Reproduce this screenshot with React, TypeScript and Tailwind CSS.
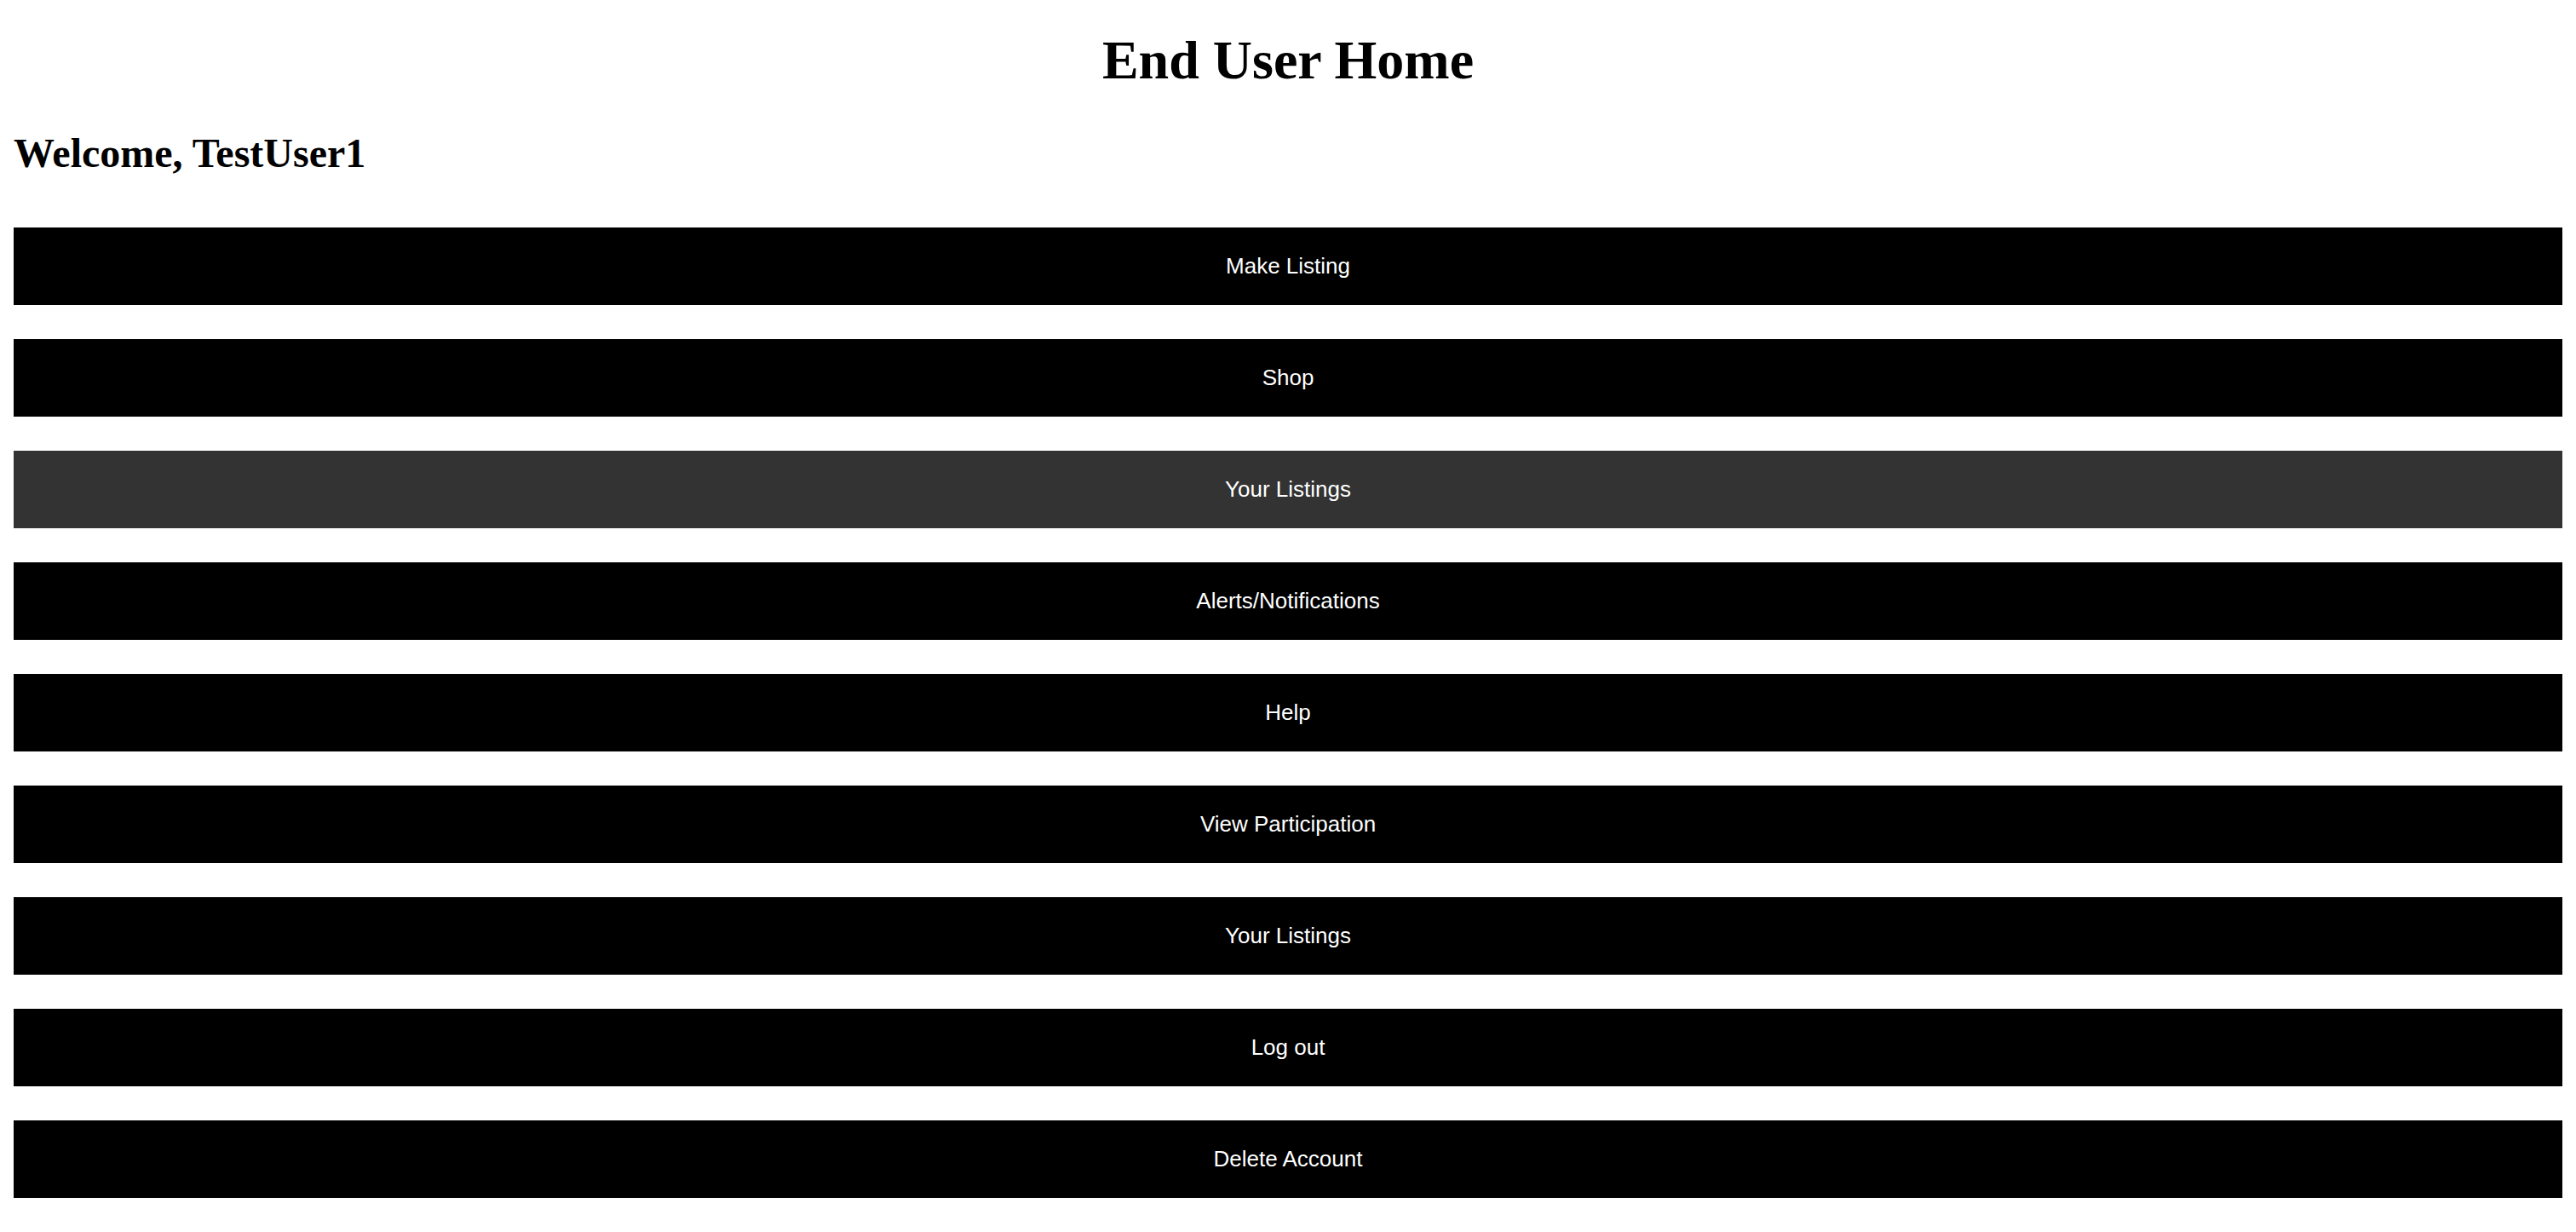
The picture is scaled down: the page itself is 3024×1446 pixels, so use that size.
const buttons = [
  { label: "Make Listing" },
  { label: "Shop" },
  { label: "Your Listings", active: true },
  { label: "Alerts/Notifications" },
  { label: "Help" },
  { label: "View Participation" },
  { label: "Your Listings" },
  { label: "Log out" },
  { label: "Delete Account" },
]

export default function App() {
  return (
    <main className="min-h-screen bg-white px-4 pb-10 font-['Liberation_Serif',serif] text-black">
      <h1 className="pt-[23px] text-center text-[64px] font-bold leading-[96px]">End User Home</h1>

      <h2 className="mt-[25px] text-[48px] font-bold leading-[72px]">Welcome, TestUser1</h2>

      <nav className="mt-[51px] flex flex-col gap-[40px]">
        {buttons.map((b, i) => (
          <button
            key={i}
            className={
              b.active
                ? "h-[91px] w-full bg-[#333333] text-center font-['Liberation_Sans',Arial,sans-serif] text-[26px] text-white"
                : "h-[91px] w-full bg-black text-center font-['Liberation_Sans',Arial,sans-serif] text-[26px] text-white"
            }
          >
            {b.label}
          </button>
        ))}
      </nav>
    </main>
  )
}
